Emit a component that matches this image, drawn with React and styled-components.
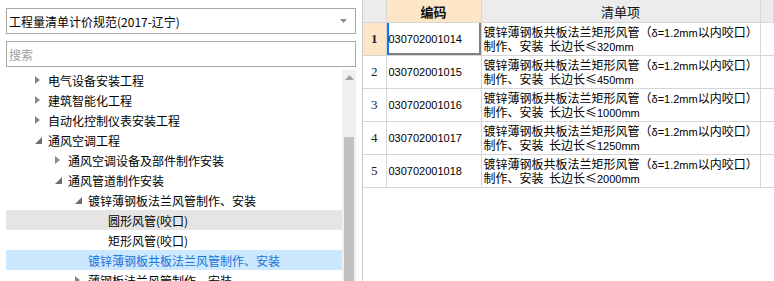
import React from 'react';
import styled, { createGlobalStyle } from 'styled-components';

const Global = createGlobalStyle`
  html, body { margin: 0; padding: 0; background: #fff; }
  body { font-family: "Noto Sans CJK SC", "Liberation Sans", sans-serif; font-size: 12px; color: #000; }
`;

const Page = styled.div`
  display: flex;
  width: 774px;
  height: 281px;
  overflow: hidden;
`;

const Left = styled.div`
  width: 357px;
  padding-left: 6px;
  box-sizing: border-box;
  display: flex;
  flex-direction: column;
`;

const Combo = styled.div`
  margin-top: 8px;
  height: 26px;
  border: 1px solid #a8a8a8;
  box-sizing: border-box;
  display: flex;
  align-items: center;
  padding: 0 8px 0 2px;
  font-size: 12px;
  justify-content: space-between;
`;

const Search = styled.div`
  margin-top: 7px;
  height: 26px;
  border: 1px solid #a8a8a8;
  box-sizing: border-box;
  display: flex;
  align-items: center;
  padding-left: 2px;
  color: #a0a0a0;
  font-size: 12px;
`;

const TreeWrap = styled.div`
  margin-top: 3px;
  flex: 1;
  display: flex;
  overflow: hidden;
`;

const Tree = styled.div`
  flex: 1;
  overflow: hidden;
`;

const Item = styled.div`
  height: 20px;
  display: flex;
  align-items: center;
  padding-left: ${(p) => 29 + p.$level * 20}px;
  background: ${(p) => (p.$state === 'sel' ? '#cce8ff' : p.$state === 'hover' ? '#e5e5e5' : 'transparent')};
  color: ${(p) => (p.$state === 'sel' ? '#1a73d9' : '#000')};
  font-size: 12px;
  white-space: nowrap;
`;

const Toggle = styled.span`
  width: 13px;
  flex: none;
  display: flex;
  align-items: center;
`;

const Scroll = styled.div`
  width: 14px;
  background: #f0f0f0;
  display: flex;
  flex-direction: column;
  align-items: center;
`;

const ArrowBtn = styled.div`
  height: 14px;
  display: flex;
  align-items: center;
  justify-content: center;
`;

const Thumb = styled.div`
  margin-top: 53px;
  width: 10px;
  flex: 1;
  background: #c1c1c1;
`;

const Right = styled.div`
  flex: 1;
  margin-left: 6px;
  border-left: 1px solid #c9c9c9;
`;

const Table = styled.table`
  border-collapse: collapse;
  table-layout: fixed;
  width: 411px;
`;

const Th = styled.th`
  height: 22px;
  padding: 0;
  font-weight: ${(p) => (p.$bold ? 'bold' : 'normal')};
  font-size: 13px;
  background: ${(p) => (p.$active ? '#fde6c8' : '#ececec')};
  border-right: 1px solid #d6d6d6;
  border-bottom: 1px solid #d6d6d6;
  color: #111;
`;

const Num = styled.td`
  height: 32px;
  padding: 0;
  text-align: center;
  font-family: "Liberation Serif", serif;
  font-size: 13px;
  font-weight: ${(p) => (p.$active ? 'bold' : 'normal')};
  background: ${(p) => (p.$active ? '#fde6c8' : '#fff')};
  border-right: 1px solid #d6d6d6;
  border-bottom: 1px solid #d6d6d6;
  color: #222;
`;

const Code = styled.td`
  padding: 0 0 0 2px;
  font-family: "Liberation Sans", sans-serif;
  font-size: 11px;
  border-right: 1px solid #d6d6d6;
  border-bottom: 1px solid #d6d6d6;
  box-shadow: ${(p) => (p.$focus ? 'inset 2px 0 0 #1a73e8, inset -2px -2px 0 #808080' : 'none')};
`;

const Desc = styled.td`
  padding: 0 0 0 2px;
  font-size: 12px;
  line-height: 14px;
  border-right: 1px solid #d6d6d6;
  border-bottom: 1px solid #d6d6d6;
  white-space: nowrap;
  overflow: hidden;
`;

const Line = styled.div`
  height: 14px;
  line-height: 14px;
`;

const Lat = styled.span`
  font-family: "Liberation Sans", sans-serif;
  font-size: 11px;
  line-height: 14px;
`;

const Filler = styled.td`
  border-bottom: 1px solid #d6d6d6;
`;

const Right2 = () => (
  <svg width="5" height="8" viewBox="0 0 5 8"><path d="M0 0L5 4L0 8Z" fill="#8a8a8a" /></svg>
);
const Down = () => (
  <svg width="7" height="7" viewBox="0 0 7 7"><path d="M7 0L7 7L0 7Z" fill="#6e6e6e" /></svg>
);

const tree = [
  { t: '电气设备安装工程', l: 0, k: 'c' },
  { t: '建筑智能化工程', l: 0, k: 'c' },
  { t: '自动化控制仪表安装工程', l: 0, k: 'c' },
  { t: '通风空调工程', l: 0, k: 'e' },
  { t: '通风空调设备及部件制作安装', l: 1, k: 'c' },
  { t: '通风管道制作安装', l: 1, k: 'e' },
  { t: '镀锌薄钢板法兰风管制作、安装', l: 2, k: 'e' },
  { t: '圆形风管(咬口)', l: 3, k: 'n', s: 'hover' },
  { t: '矩形风管(咬口)', l: 3, k: 'n' },
  { t: '镀锌薄钢板共板法兰风管制作、安装', l: 2, k: 'n', s: 'sel' },
  { t: '薄钢板法兰风管制作、安装', l: 2, k: 'c' },
];

const rows = [
  ['030702001014', '320'],
  ['030702001015', '450'],
  ['030702001016', '1000'],
  ['030702001017', '1250'],
  ['030702001018', '2000'],
];

export default function App() {
  return (
    <Page>
      <Global />
      <Left>
        <Combo>
          <span>工程量清单计价规范(2017-辽宁)</span>
          <svg width="7" height="4" viewBox="0 0 7 4"><path d="M0 0H7L3.5 4Z" fill="#8a8a8a" /></svg>
        </Combo>
        <Search>搜索</Search>
        <TreeWrap>
          <Tree>
            {tree.map((n) => (
              <Item key={n.t} $level={n.l} $state={n.s}>
                <Toggle>{n.k === 'c' ? <Right2 /> : n.k === 'e' ? <Down /> : null}</Toggle>
                {n.t}
              </Item>
            ))}
          </Tree>
          <Scroll>
            <ArrowBtn>
              <svg width="9" height="5" viewBox="0 0 9 5"><path d="M0 5L4.5 0L9 5Z" fill="#a0a0a0" /></svg>
            </ArrowBtn>
            <Thumb />
          </Scroll>
        </TreeWrap>
      </Left>
      <Right>
        <Table>
          <colgroup>
            <col style={{ width: 23 }} />
            <col style={{ width: 95 }} />
            <col style={{ width: 279 }} />
            <col />
          </colgroup>
          <thead>
            <tr>
              <Th />
              <Th $active $bold>编码</Th>
              <Th>清单项</Th>
              <Th />
            </tr>
          </thead>
          <tbody>
            {rows.map((r, i) => (
              <tr key={r[0]}>
                <Num $active={i === 0}>{i + 1}</Num>
                <Code $focus={i === 0}>{r[0]}</Code>
                <Desc>
                  <Line>镀锌薄钢板共板法兰矩形风管（<Lat>δ=1.2mm</Lat>以内咬口）</Line>
                  <Line>制作、安装&nbsp;&nbsp;长边长≤<Lat>{r[1]}mm</Lat></Line>
                </Desc>
                <Filler />
              </tr>
            ))}
          </tbody>
        </Table>
      </Right>
    </Page>
  );
}
